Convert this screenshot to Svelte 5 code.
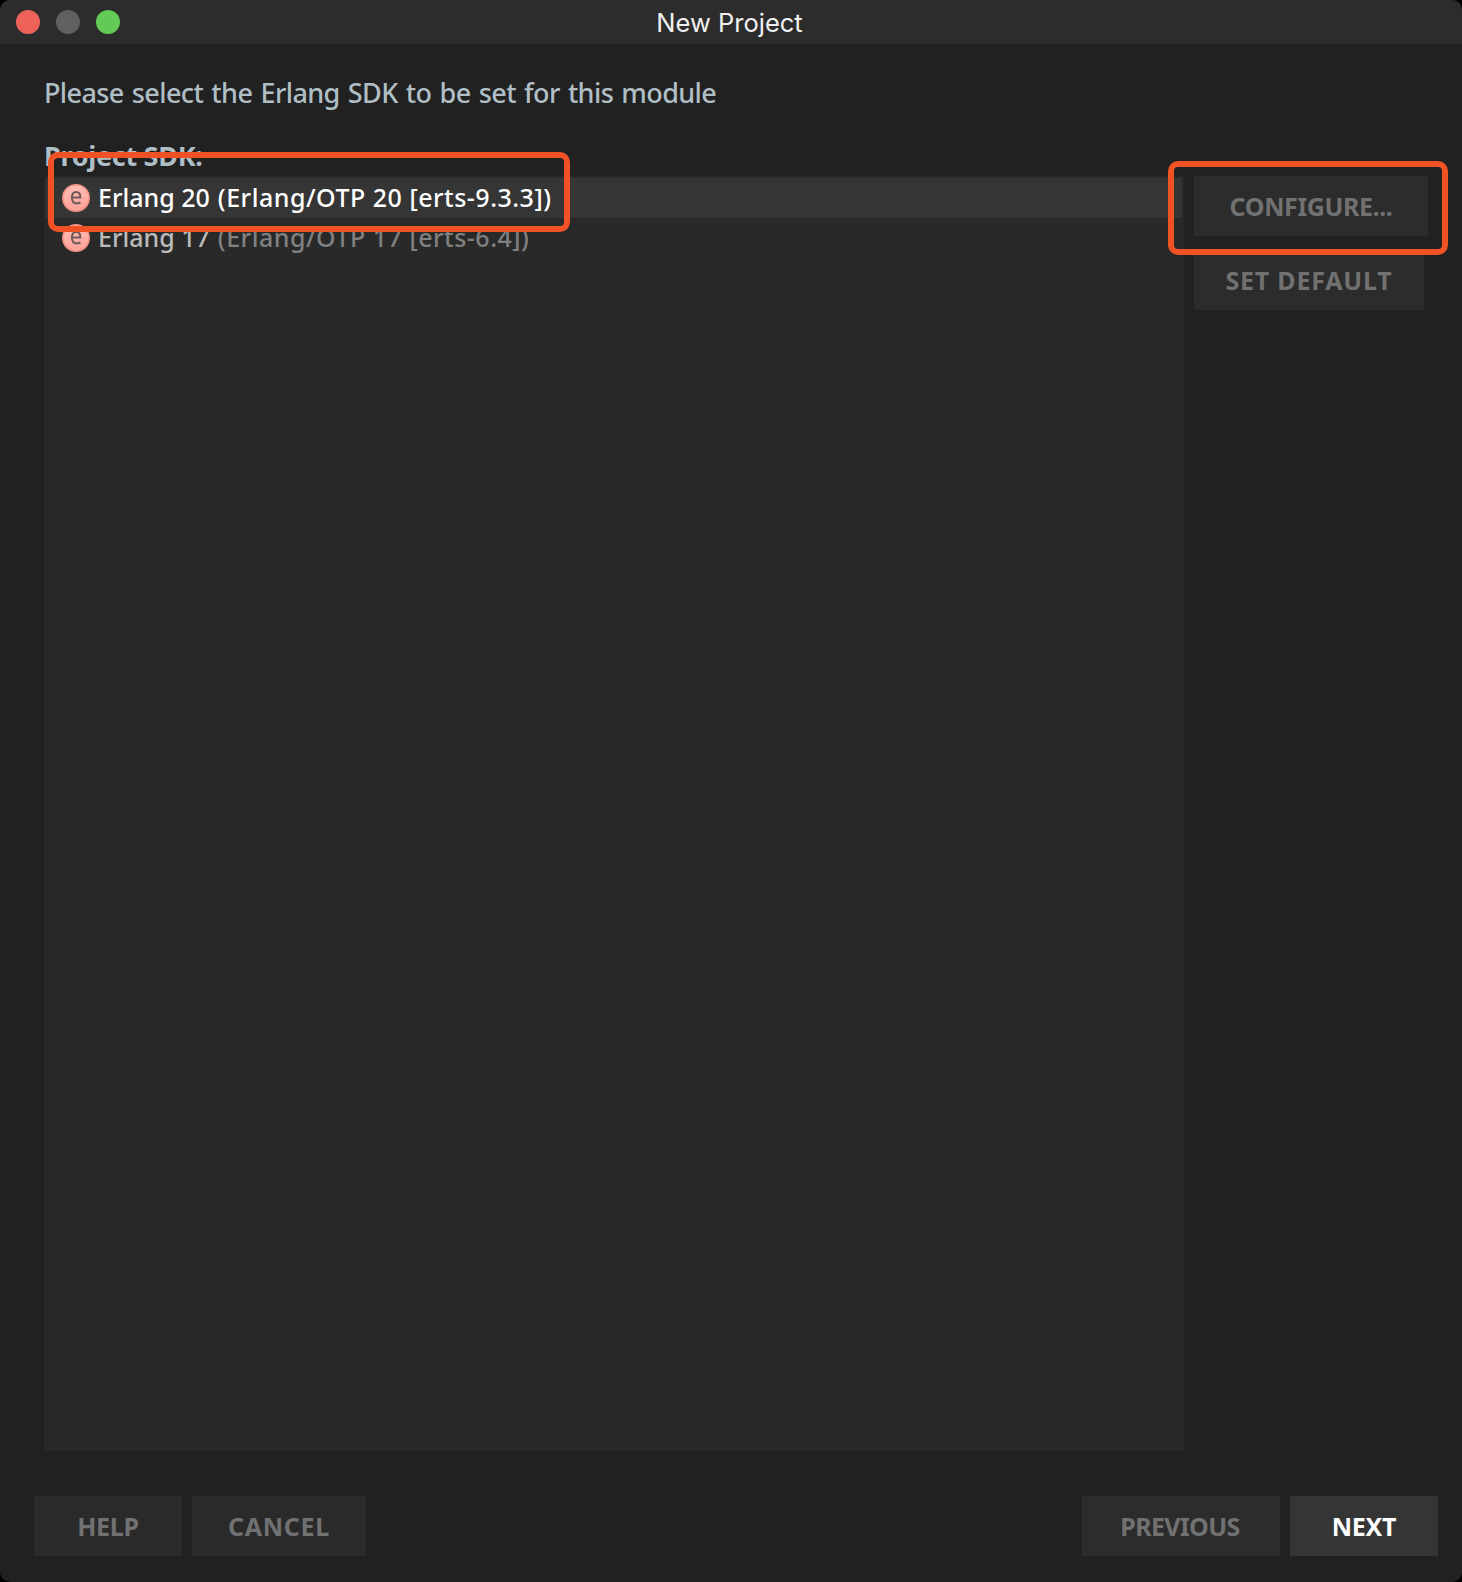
<script>
  const sdks = [
    { name: 'Erlang 20', version: '(Erlang/OTP 20 [erts-9.3.3])', selected: true },
    { name: 'Erlang 17', version: '(Erlang/OTP 17 [erts-6.4])', selected: false }
  ];
</script>

<main class="window">
  <header class="titlebar">
    <div class="lights">
      <span class="light close"></span>
      <span class="light minimize"></span>
      <span class="light zoom"></span>
    </div>
    <h1><span>New Project</span></h1>
  </header>

  <section class="content">
    <p class="prompt"><span>Please select the Erlang SDK to be set for this module</span></p>
    <h2><span>Project SDK:</span></h2>
    <div class="columns">
      <ul class="sdk-list">
        {#each sdks as sdk}
          <li class:selected={sdk.selected}>
            <svg class="icon" viewBox="0 0 28 28" aria-hidden="true">
              <defs>
                <linearGradient id="disc" x1="0" y1="0" x2="0" y2="1">
                  <stop offset="0" stop-color="#ffbdb4" />
                  <stop offset="1" stop-color="#ffa297" />
                </linearGradient>
              </defs>
              <circle cx="14" cy="14" r="13.2" fill="url(#disc)" stroke="#ef9185" stroke-width="1.6" />
              <path d="M10 13.4H18.3C18.3 10 16.8 8 14.3 8C11.5 8 9.9 10.3 9.9 13.6C9.9 17.2 11.8 19.4 14.8 19.4C16.2 19.4 17.4 19.1 18.5 18.5" fill="none" stroke="#715c5a" stroke-width="2" />
            </svg>
            <span class="name">{sdk.name}</span>
            <span class="version">{sdk.version}</span>
          </li>
        {/each}
      </ul>
      <div class="side">
        <button class="configure"><span>CONFIGURE...</span></button>
        <button class="default"><span>SET DEFAULT</span></button>
      </div>
    </div>
  </section>

  <footer>
    <button class="help"><span>HELP</span></button>
    <button class="cancel"><span>CANCEL</span></button>
    <button class="previous"><span>PREVIOUS</span></button>
    <button class="next"><span>NEXT</span></button>
  </footer>

  <div class="mark mark-sdk"></div>
  <div class="mark mark-configure"></div>
</main>

<style>
  :global(body) { background: #000; }
  .window {
    position: relative;
    box-sizing: border-box;
    width: 1462px;
    height: 1582px;
    display: flex;
    flex-direction: column;
    overflow: hidden;
    border-radius: 10px;
    background: #212121;
    font-family: "Noto Sans", sans-serif;
    white-space: nowrap;
  }
  h1, h2, p, ul { margin: 0; padding: 0; }
  .titlebar {
    height: 44px;
    flex: none;
    display: grid;
    grid-template-columns: 200px 1fr 203px;
    align-items: center;
    background: #2c2c2c;
  }
  .lights { display: flex; gap: 16px; padding-left: 16px; }
  .light { width: 24px; height: 24px; border-radius: 50%; }
  .close { background: #ee6259; }
  .minimize { background: #606060; }
  .zoom { background: #62ca55; }
  h1 {
    font: 400 25.5px/44px Inter, sans-serif;
    color: #f0f0f0;
    text-align: center;
    padding-top: 1px;
    height: 43px;
  }
  .content { padding: 27px 24px 0 44px; }
  .prompt {
    height: 42px;
    font-size: 27px;
    line-height: 43px;
    font-weight: 500;
    letter-spacing: -0.6px;
    word-spacing: 1.7px;
    color: #b0bec5;
  }
  h2 {
    height: 41px;
    margin-top: 22px;
    font-size: 27px;
    line-height: 42px;
    font-weight: 700;
    color: #b0bec5;
    letter-spacing: -0.3px;
  }
  .columns { display: flex; gap: 10px; }
  .sdk-list {
    box-sizing: border-box;
    width: 1140px;
    height: 1274px;
    padding: 2px;
    list-style: none;
    background: #292929;
  }
  li {
    display: flex;
    align-items: center;
    height: 40px;
    padding-left: 16px;
    font-size: 25px;
    font-weight: 500;
    line-height: 38px;
    color: #bbb;
  }
  li.selected { background: #353535; }
  .selected .name, .selected .version { color: #fff; }
  .icon { width: 28px; height: 28px; margin-right: 8px; flex: none; }
  .name, .version { height: 40px; }
  .name { margin-right: 8px; }
  .version { color: #808080; letter-spacing: 0.51px; }
  .side { display: flex; flex-direction: column; gap: 14px; }
  button {
    height: 60px;
    padding: 0;
    border: 0;
    background: #2c2c2c;
    color: #717171;
    font: 700 25px/60px "Noto Sans", sans-serif;
    white-space: nowrap;
  }
  .configure { width: 234px; letter-spacing: -0.4px; }
  .default { width: 230px; letter-spacing: 0.8px; }
  footer {
    display: flex;
    gap: 10px;
    padding: 46px 24px 26px 34px;
  }
  .help { width: 148px; background: #2a2a2a; letter-spacing: -0.3px; }
  .cancel { width: 174px; background: #2a2a2a; letter-spacing: 0.7px; }
  .previous { width: 198px; margin-left: auto; padding-right: 2px; letter-spacing: -0.6px; }
  .next { width: 148px; background: #353535; color: #fff; letter-spacing: -0.3px; }
  .mark {
    position: absolute;
    box-sizing: border-box;
    border: 6px solid #f15225;
    border-radius: 10px;
  }
  .mark-sdk { left: 48px; top: 152px; width: 522px; height: 80px; }
  .mark-configure { left: 1168px; top: 161px; width: 280px; height: 94px; }
</style>
